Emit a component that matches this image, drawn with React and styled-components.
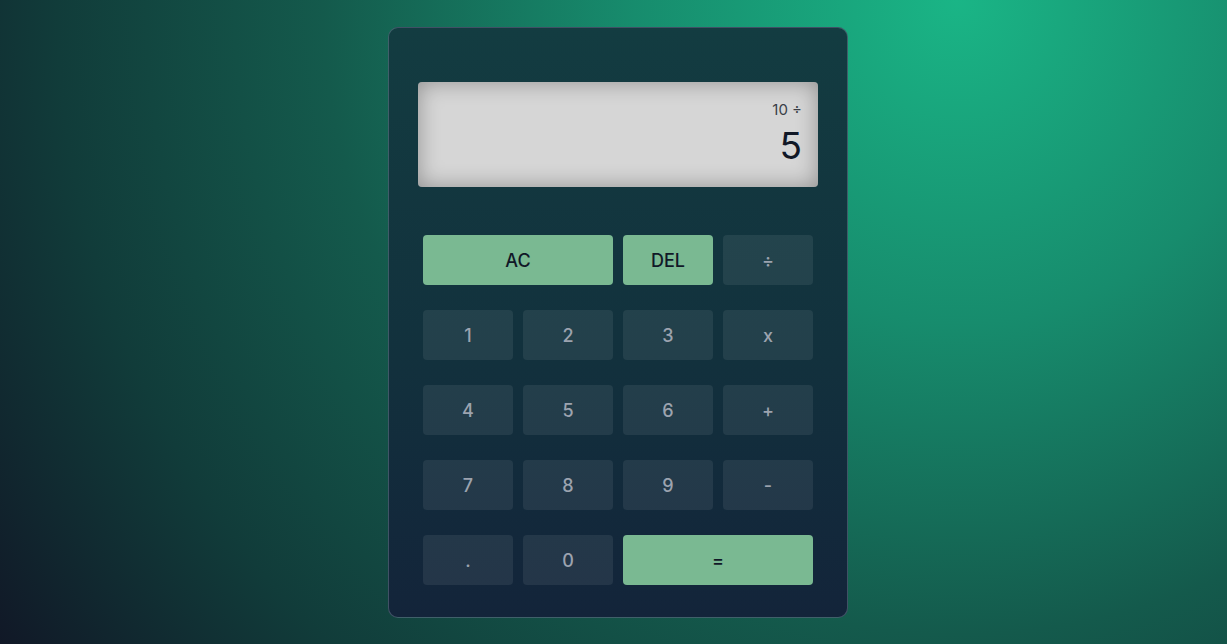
import React from 'react';
import styled, {createGlobalStyle} from 'styled-components';

const GlobalStyle = createGlobalStyle`
    html, body {
        margin: 0;
        height: 100%;
    }
    body {
        font-family: Inter, "Noto Sans", sans-serif;
        background: radial-gradient(circle farthest-corner at 78% 0%, #1ab586 0%, #178c6d 28%, #145a4c 55%, #113c3a 78%, #111827 100%);
    }
    #root {
        height: 100%;
    }
`

const Page = styled.main`
    height: 100%;
    display: flex;
    align-items: flex-start;
    justify-content: center;
    padding: 27px 0 0 9px;
    box-sizing: border-box;
`

const Calculator = styled.div`
    width: 400px;
    padding: 54px 29px 32px;
    border: 1px solid rgba(148, 163, 184, 0.35);
    border-radius: 10px;
    background: linear-gradient(180deg, #133c41 0%, #12313d 55%, #13243a 100%);
    display: flex;
    flex-direction: column;
    gap: 48px;
`

const Display = styled.div`
    height: 105px;
    box-sizing: border-box;
    padding: 17px 16px 0;
    border-radius: 4px;
    background: #d6d6d6;
    box-shadow: inset 0 0 22px rgba(0, 0, 0, 0.33);
    display: flex;
    flex-direction: column;
    align-items: flex-end;
`

const Previous = styled.div`
    font-size: 15px;
    line-height: 22px;
    color: #3a3f47;
`

const Current = styled.div`
    font-size: 37px;
    line-height: 42px;
    color: #111827;
    margin-top: 4px;
`

const Keys = styled.div`
    padding: 0 5px;
    display: grid;
    grid-template-columns: repeat(4, 90px);
    grid-auto-rows: 50px;
    column-gap: 10px;
    row-gap: 25px;
`

const Key = styled.button`
    grid-column: span ${p => p.$span || 1};
    border: none;
    border-radius: 4px;
    font-family: inherit;
    font-size: 18px;
    font-weight: 500;
    cursor: pointer;
    background: ${p => p.$accent ? '#7ab992' : 'rgba(255, 255, 255, 0.075)'};
    color: ${p => p.$accent ? '#111827' : '#9ca3af'};
`

const keys = [
    {label: 'AC', span: 2, accent: true},
    {label: 'DEL', accent: true},
    {label: '÷'},
    {label: '1'}, {label: '2'}, {label: '3'}, {label: 'x'},
    {label: '4'}, {label: '5'}, {label: '6'}, {label: '+'},
    {label: '7'}, {label: '8'}, {label: '9'}, {label: '-'},
    {label: '.'}, {label: '0'},
    {label: '=', span: 2, accent: true},
]

const App = () => {
    return (
        <>
            <GlobalStyle/>
            <Page>
                <Calculator>
                    <Display>
                        <Previous>10 ÷</Previous>
                        <Current>5</Current>
                    </Display>
                    <Keys>
                        {keys.map(k => (
                            <Key key={k.label} $span={k.span} $accent={k.accent}>{k.label}</Key>
                        ))}
                    </Keys>
                </Calculator>
            </Page>
        </>
    );
};

export default App;
